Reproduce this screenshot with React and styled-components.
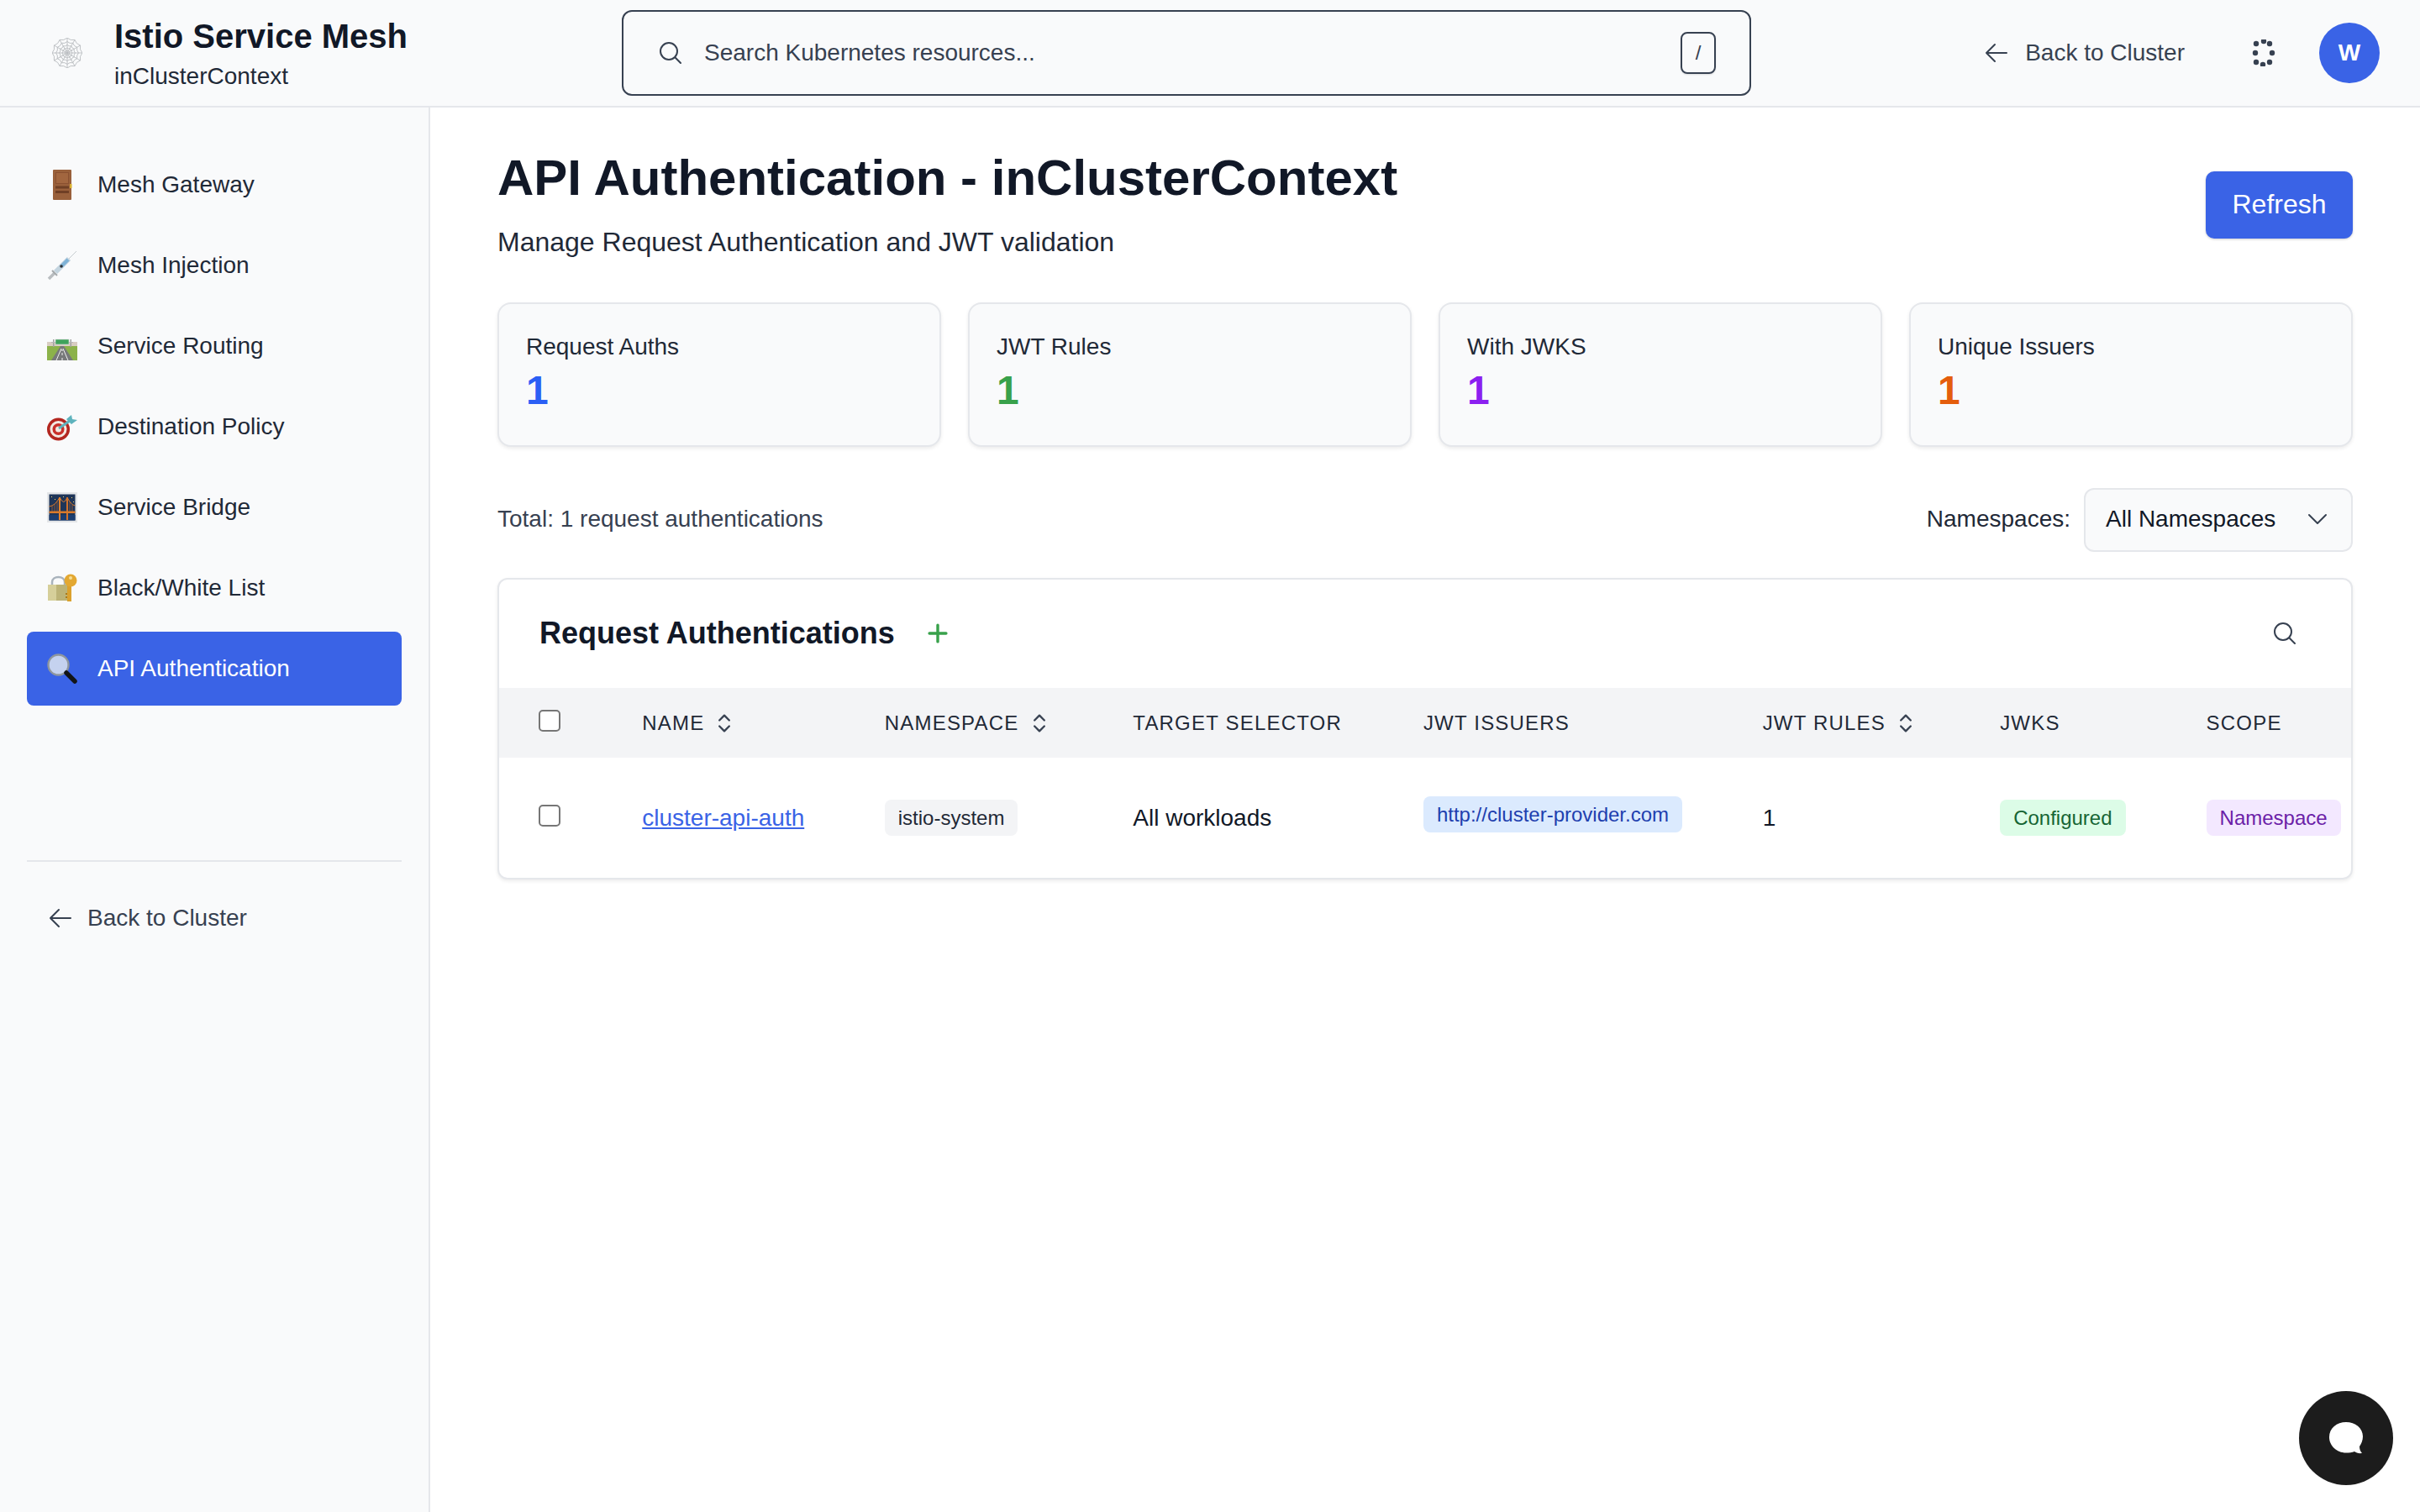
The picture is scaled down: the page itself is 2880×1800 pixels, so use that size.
import React from 'react'
import styled, { createGlobalStyle } from 'styled-components'
import { ChevronsUpDown, Plus } from 'lucide-react'
import {
  HiOutlineArrowLeft,
  HiOutlineChevronDown,
  HiOutlineMagnifyingGlass,
} from 'react-icons/hi2'

const BLUE = '#3a63e6';

const GlobalStyle = createGlobalStyle`
  html, body { margin: 0; padding: 0; background: #fff; }
  body { font-family: "Liberation Sans", Arial, sans-serif; color: #111827; }
  * { box-sizing: border-box; }
`
const Page = styled.div`
  width: 2880px;
  height: 1800px;
  display: flex;
  flex-direction: column;
  overflow: hidden;
`
const Header = styled.header`
  height: 128px;
  flex: none;
  display: flex;
  align-items: center;
  background: #f9fafb;
  border-bottom: 2px solid #e5e7eb;
`
const Brand = styled.div`
  width: 740px;
  display: flex;
  align-items: center;
  gap: 38px;
  padding-left: 62px;
`
const BrandText = styled.div`
  display: flex;
  flex-direction: column;
  gap: 8px;
  padding-top: 2px;
`
const BrandTitle = styled.div`
  font-size: 40px;
  line-height: 46px;
  font-weight: 700;
  color: #111827;
`
const BrandSub = styled.div`
  font-size: 28px;
  line-height: 34px;
  color: #1f2937;
`
const SearchBox = styled.div`
  width: 1344px;
  height: 102px;
  display: flex;
  align-items: center;
  gap: 24px;
  padding: 0 40px;
  background: #f9fafb;
  border: 2px solid #374151;
  border-radius: 12px;
  color: #374151;
  font-size: 28px;
`
const Kbd = styled.span`
  margin-left: auto;
  width: 42px;
  height: 50px;
  display: flex;
  align-items: center;
  justify-content: center;
  border: 2px solid #374151;
  border-radius: 8px;
  font-size: 24px;
  box-shadow: 0 1px 2px rgba(0,0,0,0.12);
`
const HeaderRight = styled.div`
  margin-left: auto;
  display: flex;
  align-items: center;
  padding-right: 48px;
`
const BackLink = styled.div`
  display: flex;
  align-items: center;
  gap: ${props => props.$gap}px;
  font-size: 28px;
  color: #374151;
`
const Spinner = styled.svg`
  margin-left: 78px;
  width: 32px;
  height: 32px;
`
const Avatar = styled.div`
  margin-left: 50px;
  width: 72px;
  height: 72px;
  border-radius: 50%;
  background: ${BLUE};
  color: #fff;
  font-size: 28px;
  font-weight: 700;
  display: flex;
  align-items: center;
  justify-content: center;
`
const Body = styled.div`
  flex: 1;
  display: flex;
  min-height: 0;
`
const Sidebar = styled.aside`
  width: 512px;
  flex: none;
  background: #f9fafb;
  border-right: 2px solid #e5e7eb;
  padding: 48px 32px 0;
`
const Nav = styled.nav`
  display: flex;
  flex-direction: column;
  gap: 8px;
`
const NavItem = styled.div`
  height: 88px;
  display: flex;
  align-items: center;
  gap: 24px;
  padding-left: 24px;
  border-radius: 8px;
  font-size: 28px;
  color: ${props => props.$active ? '#fff' : '#1f2937'};
  background: ${props => props.$active ? BLUE : 'transparent'};
`
const EmojiIcon = styled.svg`
  width: 36px;
  height: 36px;
  flex: none;
`
const SideDivider = styled.div`
  margin-top: 184px;
  border-top: 2px solid #e5e7eb;
`
const SideBack = styled.div`
  margin-top: 51px;
  padding-left: 24px;
`
const Main = styled.main`
  flex: 1;
  padding: 48px 80px 0;
  background: #fff;
`
const TitleRow = styled.div`
  display: flex;
  align-items: center;
  justify-content: space-between;
`
const PageTitle = styled.h1`
  margin: 0;
  font-size: 60px;
  line-height: 72px;
  font-weight: 700;
  color: #111827;
`
const PageSub = styled.p`
  margin: 18px 0 0;
  font-size: 32px;
  line-height: 44px;
  color: #1f2937;
`
const RefreshButton = styled.button`
  width: 175px;
  height: 80px;
  margin-top: 1px;
  border: 0;
  border-radius: 10px;
  background: ${BLUE};
  color: #fff;
  font-family: inherit;
  font-size: 32px;
  box-shadow: 0 1px 3px rgba(0,0,0,0.2);
`
const Stats = styled.div`
  margin-top: 50px;
  display: grid;
  grid-template-columns: repeat(4, 1fr);
  gap: 32px;
`
const StatCard = styled.div`
  height: 172px;
  padding: 34px 32px 0;
  background: #f9fafb;
  border: 2px solid #e5e7eb;
  border-radius: 16px;
  box-shadow: 0 2px 4px rgba(0,0,0,0.08);
`
const StatLabel = styled.div`
  font-size: 28px;
  line-height: 34px;
  color: #1f2937;
`
const StatValue = styled.div`
  margin-top: 8px;
  font-size: 48px;
  line-height: 54px;
  font-weight: 700;
  color: ${props => props.$color};
`
const FilterRow = styled.div`
  margin-top: 49px;
  display: flex;
  align-items: center;
  justify-content: space-between;
`
const TotalText = styled.div`
  margin-top: -2px;
  font-size: 28px;
  color: #374151;
`
const FilterRight = styled.div`
  display: flex;
  align-items: center;
  gap: 16px;
  font-size: 28px;
  color: #1f2937;
`
const FilterLabel = styled.span`
  margin-top: -2px;
`
const SelectBox = styled.div`
  width: 320px;
  height: 76px;
  display: flex;
  align-items: center;
  justify-content: space-between;
  padding: 0 24px 2px;
  background: #f9fafb;
  border: 2px solid #e5e7eb;
  border-radius: 12px;
  color: #111827;
  svg { color: #374151; }
`
const TableCard = styled.section`
  margin-top: 31px;
  background: #fff;
  border: 2px solid #e5e7eb;
  border-radius: 12px;
  box-shadow: 0 2px 4px rgba(0,0,0,0.08);
  overflow: hidden;
`
const TableTop = styled.div`
  height: 129px;
  display: flex;
  align-items: center;
  padding: 0 63px 2px 48px;
`
const TableTitle = styled.h2`
  margin: 0;
  font-size: 36px;
  font-weight: 700;
  color: #111827;
`
const AddIcon = styled(Plus)`
  margin-left: 34px;
  color: #38a14b;
`
const SearchIcon = styled(HiOutlineMagnifyingGlass)`
  margin-left: auto;
  color: #374151;
`
const Table = styled.table`
  width: 100%;
  table-layout: fixed;
  border-collapse: collapse;
`
const Th = styled.th`
  height: 83px;
  padding: 0 24px;
  background: #f3f4f6;
  text-align: left;
  font-size: 24px;
  font-weight: 400;
  letter-spacing: 1.2px;
  color: #1f2937;
  &:first-child { padding-left: 47px; }
`
const Td = styled.td`
  height: 143px;
  padding: 0 24px;
  font-size: 28px;
  color: #111827;
  &:first-child { padding-left: 47px; }
`
const HeadLabel = styled.span`
  display: inline-flex;
  align-items: center;
  gap: 10px;
`
const Checkbox = styled.input`
  display: block;
  appearance: none;
  margin: 0 0 6px;
  width: 26px;
  height: 26px;
  background: #fff;
  border: 2px solid #767676;
  border-radius: 5px;
`
const NameLink = styled.a`
  color: ${BLUE};
  text-decoration: underline;
`
const Pill = styled.span`
  display: inline-block;
  height: 43px;
  padding: 0 16px;
  border-radius: 8px;
  font-size: 24px;
  line-height: 43px;
  color: ${props => props.$color};
  background: ${props => props.$bg};
  position: relative;
  top: ${props => props.$up ? '-4px' : '0'};
`
const ChatButton = styled.div`
  position: fixed;
  left: 2736px;
  top: 1656px;
  width: 112px;
  height: 112px;
  border-radius: 50%;
  background: #1c1c1c;
  display: flex;
  align-items: center;
  justify-content: center;
`

const webSpokes = Array.from({ length: 12 }, (_, i) => (i * Math.PI) / 6);
const webRing = (r) => {
  const point = (radius, a) => `${18 + radius * Math.cos(a)} ${18 + radius * Math.sin(a)}`;
  let d = `M${point(r, 0)}`;
  webSpokes.forEach((a) => {
    const next = a + Math.PI / 6;
    d += `Q${point(r * 0.82, a + Math.PI / 12)} ${point(r, next)}`;
  });
  return d;
};

function WebLogo() {
  return (
    <EmojiIcon viewBox="0 0 36 36" fill="none" stroke="#b9bcbf" strokeWidth="0.9">
      {webSpokes.map(a => (
        <line key={a} x1="18" y1="18" x2={18 + 18 * Math.cos(a)} y2={18 + 18 * Math.sin(a)} />
      ))}
      {[3, 6, 9.500, 13.500, 18].map(r => <path key={r} d={webRing(r)} />)}
    </EmojiIcon>
  )
}

function DoorIcon() {
  return (
    <EmojiIcon viewBox="0 0 36 36">
      <rect x="7" y="0" width="22" height="36" rx="1" fill="#99603b" />
      <rect x="10" y="3" width="16" height="14" fill="#8a5030" />
      <rect x="11" y="4" width="14" height="12" fill="#a2663f" />
      <rect x="10" y="19.500" width="16" height="3" fill="#6f3f25" />
      <rect x="10" y="25" width="16" height="3" fill="#6f3f25" />
      <rect x="27" y="17" width="2.500" height="5" fill="#d9b12f" />
    </EmojiIcon>
  )
}

function SyringeIcon() {
  return (
    <EmojiIcon viewBox="0 0 36 36">
      <line x1="26" y1="10" x2="35" y2="1" stroke="#c6ccd0" strokeWidth="1" />
      <line x1="10" y1="26" x2="26" y2="10" stroke="#c3d4df" strokeWidth="6" />
      <line x1="17" y1="19" x2="25" y2="11" stroke="#7fb2d6" strokeWidth="4" />
      <line x1="2" y1="34" x2="9" y2="27" stroke="#b9bdc0" strokeWidth="3.500" />
      <line x1="6" y1="24" x2="12" y2="30" stroke="#a3a8ab" strokeWidth="2" />
      <circle cx="17" cy="19" r="1.800" fill="#2c3338" />
    </EmojiIcon>
  )
}

function RoadIcon() {
  return (
    <EmojiIcon viewBox="0 0 36 36">
      <rect x="0" y="13" width="36" height="6" fill="#d8cdc2" />
      <rect x="0" y="18" width="36" height="17" fill="#8cb24a" />
      <path d="M5 35L16 18H20L31 35Z" fill="#77797a" />
      <path d="M11 35L17 21M25 35L19 21" stroke="#f2f2f2" strokeWidth="1" />
      <path d="M18 35V32M18 29V26M18 24V22" stroke="#f2f2f2" strokeWidth="1" />
      <rect x="7" y="10" width="1.500" height="9" fill="#a2a2a2" />
      <rect x="27.500" y="10" width="1.500" height="9" fill="#a2a2a2" />
      <rect x="5" y="13" width="26" height="1" fill="#b5b5b5" />
      <rect x="10" y="10" width="16" height="6" fill="#3fa35c" stroke="#d6d6d6" strokeWidth="0.600" />
    </EmojiIcon>
  )
}

function DartIcon() {
  return (
    <EmojiIcon viewBox="0 0 36 36">
      <circle cx="13.500" cy="21" r="13.500" fill="#b3261f" />
      <circle cx="13.500" cy="21" r="10" fill="#f3e9e2" />
      <circle cx="13.500" cy="21" r="7" fill="#c9302a" />
      <circle cx="13.500" cy="21" r="3.500" fill="#f3e9e2" />
      <line x1="14" y1="20" x2="27" y2="11" stroke="#5eb3bd" strokeWidth="3" />
      <path d="M23 9L29 4L30 9L36 10L29 15Z" fill="#5eb3bd" />
    </EmojiIcon>
  )
}

function BridgeIcon() {
  return (
    <EmojiIcon viewBox="0 0 36 36" fill="none">
      <rect width="36" height="36" fill="#e4e6e8" />
      <rect x="2.500" y="2.500" width="31" height="31" fill="#1f3558" />
      <rect x="2.500" y="27" width="31" height="6.500" fill="#1b3d70" />
      <path d="M2.500 17Q10 16 15 6Q20 17 24 6Q28 15 33.500 16" stroke="#d97a2b" strokeWidth="1" />
      <path d="M6 23V16M9 23V14M12 23V10M27 23V12M30 23V15" stroke="#b9682b" strokeWidth="0.700" />
      <rect x="14" y="6" width="2" height="27" fill="#e0822f" />
      <rect x="23" y="6" width="2" height="27" fill="#d0712b" />
      <rect x="2.500" y="22.500" width="31" height="2.500" fill="#d97a2b" />
      <path d="M5 5h1v1H5zM29 6h1v1h-1zM9 8h1v1H9zM19 5h1v1h-1zM31 11h1v1h-1z" fill="#f0d46a" />
    </EmojiIcon>
  )
}

function LockKeyIcon() {
  return (
    <EmojiIcon viewBox="0 0 36 36">
      <path d="M6 15V11C6 3 21 3 21 11V15" fill="none" stroke="#a9b3bc" strokeWidth="2.500" />
      <rect x="1" y="14" width="24" height="19" rx="1" fill="#bcb377" />
      <rect x="1" y="14" width="10" height="19" fill="#d6cf9a" />
      <rect x="24" y="10" width="5" height="24" fill="#dba12e" />
      <rect x="22" y="24" width="2" height="2" fill="#a87a1e" />
      <rect x="22" y="28" width="2" height="2" fill="#a87a1e" />
      <circle cx="28" cy="9" r="7.500" fill="#e3a832" />
      <circle cx="28" cy="6" r="2" fill="#f6dc92" />
    </EmojiIcon>
  )
}

function MagnifierIcon() {
  return (
    <EmojiIcon viewBox="0 0 36 36">
      <circle cx="13.500" cy="13.500" r="12" fill="#c5d2ef" stroke="#8f979e" strokeWidth="2.400" />
      <path d="M23 23L33 33" stroke="#121416" strokeWidth="5.500" strokeLinecap="round" />
    </EmojiIcon>
  )
}

const navItems = [
  { label: 'Mesh Gateway', Icon: DoorIcon },
  { label: 'Mesh Injection', Icon: SyringeIcon },
  { label: 'Service Routing', Icon: RoadIcon },
  { label: 'Destination Policy', Icon: DartIcon },
  { label: 'Service Bridge', Icon: BridgeIcon },
  { label: 'Black/White List', Icon: LockKeyIcon },
  { label: 'API Authentication', Icon: MagnifierIcon, active: true },
];

const stats = [
  { label: 'Request Auths', color: '#2b5ff5' },
  { label: 'JWT Rules', color: '#38a14b' },
  { label: 'With JWKS', color: '#8b20f0' },
  { label: 'Unique Issuers', color: '#e45d0c' },
];

const columnWidths = [146, 288, 295, 345, 403, 282, 245, 196];

const spinnerDots = [
  [16, 2], [23, 5], [26, 16], [23, 27], [15, 30], [7, 27], [6, 16], [7, 5],
];

function SortLabel({ children }) {
  return (
    <HeadLabel>
      {children}
      <ChevronsUpDown size={28} strokeWidth={2} color="#374151" />
    </HeadLabel>
  )
}

export default function App() {
  return (
    <Page>
      <GlobalStyle />
      <Header>
        <Brand>
          <WebLogo />
          <BrandText>
            <BrandTitle>Istio Service Mesh</BrandTitle>
            <BrandSub>inClusterContext</BrandSub>
          </BrandText>
        </Brand>
        <SearchBox>
          <HiOutlineMagnifyingGlass size={32} />
          <span>Search Kubernetes resources...</span>
          <Kbd>/</Kbd>
        </SearchBox>
        <HeaderRight>
          <BackLink $gap={18}>
            <HiOutlineArrowLeft size={32} />
            Back to Cluster
          </BackLink>
          <Spinner viewBox="0 0 32 32" fill="#374151">
            {spinnerDots.map(([x, y]) => <circle key={`${x}-${y}`} cx={x} cy={y} r="3.200" />)}
          </Spinner>
          <Avatar>W</Avatar>
        </HeaderRight>
      </Header>
      <Body>
        <Sidebar>
          <Nav>
            {navItems.map(({ label, Icon, active }) => (
              <NavItem key={label} $active={active}>
                <Icon />
                {label}
              </NavItem>
            ))}
          </Nav>
          <SideDivider />
          <SideBack>
            <BackLink $gap={16}>
              <HiOutlineArrowLeft size={32} />
              Back to Cluster
            </BackLink>
          </SideBack>
        </Sidebar>
        <Main>
          <TitleRow>
            <div>
              <PageTitle>API Authentication - inClusterContext</PageTitle>
              <PageSub>Manage Request Authentication and JWT validation</PageSub>
            </div>
            <RefreshButton>Refresh</RefreshButton>
          </TitleRow>
          <Stats>
            {stats.map(stat => (
              <StatCard key={stat.label}>
                <StatLabel>{stat.label}</StatLabel>
                <StatValue $color={stat.color}>1</StatValue>
              </StatCard>
            ))}
          </Stats>
          <FilterRow>
            <TotalText>Total: 1 request authentications</TotalText>
            <FilterRight>
              <FilterLabel>Namespaces:</FilterLabel>
              <SelectBox>
                All Namespaces
                <HiOutlineChevronDown size={32} />
              </SelectBox>
            </FilterRight>
          </FilterRow>
          <TableCard>
            <TableTop>
              <TableTitle>Request Authentications</TableTitle>
              <AddIcon size={34} strokeWidth={2.4} />
              <SearchIcon size={32} />
            </TableTop>
            <Table>
              <colgroup>
                {columnWidths.map((w, i) => <col key={i} width={w} />)}
              </colgroup>
              <thead>
                <tr>
                  <Th><Checkbox type="checkbox" /></Th>
                  <Th><SortLabel>NAME</SortLabel></Th>
                  <Th><SortLabel>NAMESPACE</SortLabel></Th>
                  <Th>TARGET SELECTOR</Th>
                  <Th>JWT ISSUERS</Th>
                  <Th><SortLabel>JWT RULES</SortLabel></Th>
                  <Th>JWKS</Th>
                  <Th>SCOPE</Th>
                </tr>
              </thead>
              <tbody>
                <tr>
                  <Td><Checkbox type="checkbox" /></Td>
                  <Td><NameLink>cluster-api-auth</NameLink></Td>
                  <Td><Pill $color="#1f2937" $bg="#f3f4f6">istio-system</Pill></Td>
                  <Td>All workloads</Td>
                  <Td><Pill $up $color="#1e40af" $bg="#dbeafe">http://cluster-provider.com</Pill></Td>
                  <Td>1</Td>
                  <Td><Pill $color="#166534" $bg="#dcfce7">Configured</Pill></Td>
                  <Td><Pill $color="#6b21a8" $bg="#f3e8ff">Namespace</Pill></Td>
                </tr>
              </tbody>
            </Table>
          </TableCard>
        </Main>
      </Body>
      <ChatButton>
        <svg width="42" height="40" viewBox="0 0 42 40" fill="#fff">
          <path d="M21 1C32 1 41 8 41 18C41 23 39 27 37 30C37 33 38 36 40 38C36 38.500 33 37.500 31 36C28 37 25 37.500 21 37.500C10 37.500 1 29 1 19C1 8 10 1 21 1Z" />
        </svg>
      </ChatButton>
    </Page>
  )
}
